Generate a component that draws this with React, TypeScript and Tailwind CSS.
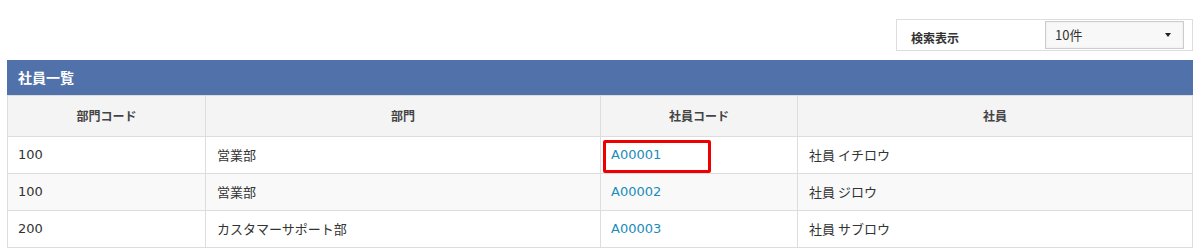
const FONT = "font-['Verdana','DejaVu_Sans','Noto_Sans_CJK_JP',sans-serif]"

type Row = { deptCode: string; dept: string; empCode: string; emp: string }

const rows: Row[] = [
  { deptCode: '100', dept: '営業部', empCode: 'A00001', emp: '社員 イチロウ' },
  { deptCode: '100', dept: '営業部', empCode: 'A00002', emp: '社員 ジロウ' },
  { deptCode: '200', dept: 'カスタマーサポート部', empCode: 'A00003', emp: '社員 サブロウ' },
]

function SearchBox() {
  return (
    <div className="flex justify-end">
      <div className="flex h-[32px] w-[297px] items-center border border-[#dddddd] bg-white pl-[14px] pr-[8px]">
        <span className="mt-[6px] w-[134px] text-[12px] font-bold text-[#333333] font-['Noto_Sans_CJK_JP',sans-serif]">
          検索表示
        </span>
        <div className="flex h-[28px] flex-1 items-center justify-between border border-[#cccccc] bg-[#f8f8f8] pl-[9px] pr-[12px] shadow-[inset_0_0_2px_rgba(0,0,0,0.08)]">
          <span className="text-[13px] text-[#333333] font-['Noto_Sans_CJK_JP',sans-serif]">10件</span>
          <span className="h-0 w-0 border-x-[3px] border-t-[4px] border-x-transparent border-t-[#222222]" />
        </div>
      </div>
    </div>
  )
}

export default function App() {
  return (
    <div className={`min-h-[252px] bg-white pl-[7px] pr-[8px] pt-[19px] ${FONT}`}>
      <SearchBox />

      <div className="mt-[9px]">
        <div className="flex h-[35px] items-center bg-[#5071a9] px-[11px]">
          <h2 className="text-[14px] font-bold text-white font-['Noto_Sans_CJK_JP',sans-serif]">社員一覧</h2>
        </div>

        <table className="w-full table-fixed border-collapse text-[13px] text-[#333333]">
          <colgroup>
            <col className="w-[198px]" />
            <col className="w-[395px]" />
            <col className="w-[197px]" />
            <col />
          </colgroup>
          <thead>
            <tr className="h-[41px] bg-[#f4f4f4]">
              {['部門コード', '部門', '社員コード', '社員'].map((h) => (
                <th
                  key={h}
                  className="border border-[#dddddd] text-center text-[12px] font-bold text-[#444444] font-['Noto_Sans_CJK_JP',sans-serif]"
                >
                  {h}
                </th>
              ))}
            </tr>
          </thead>
          <tbody>
            {rows.map((r, i) => (
              <tr key={r.empCode} className={`h-[37px] ${i % 2 === 1 ? 'bg-[#f9f9f9]' : 'bg-white'}`}>
                <td className="border border-[#dddddd] px-[10px]">{r.deptCode}</td>
                <td className="border border-[#dddddd] px-[11px] font-['Noto_Sans_CJK_JP',sans-serif]">{r.dept}</td>
                <td className="relative border border-[#dddddd] px-[10px]">
                  <a href="#" className="text-[#1a8cba]">
                    {r.empCode}
                  </a>
                  {i === 0 && (
                    <span className="pointer-events-none absolute left-[2px] top-[3px] h-[33px] w-[108px] rounded-[2px] border-[3px] border-[#ee0000]" />
                  )}
                </td>
                <td className="border border-[#dddddd] px-[11px] font-['Noto_Sans_CJK_JP',sans-serif]">{r.emp}</td>
              </tr>
            ))}
          </tbody>
        </table>
      </div>
    </div>
  )
}
